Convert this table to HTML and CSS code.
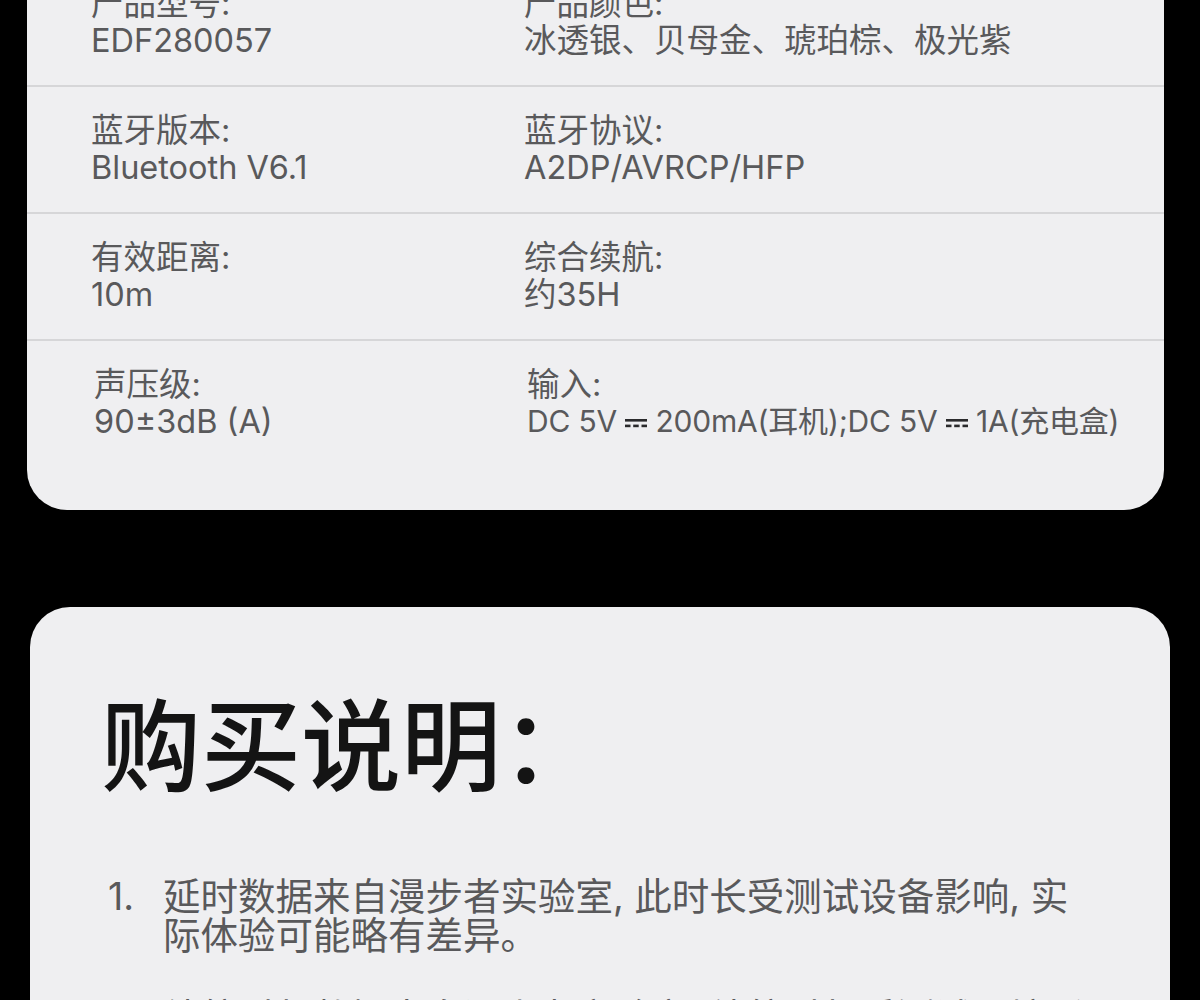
FILE: index.html
```html
<!DOCTYPE html>
<html lang="zh-CN">
<head>
    <meta charset="UTF-8">
    <meta name="viewport" content="width=device-width, initial-scale=1.0">
    <title>产品参数与购买说明</title>
    <link rel="stylesheet" href="styles.css">
</head>
<body>

    <div class="page">
        <section class="card specs">
            <div class="spec-row">
                <div class="spec">
                    <div class="spec-label">产品型号:</div>
                    <div class="spec-value">EDF280057</div>
                </div>
                <div class="spec">
                    <div class="spec-label">产品颜色:</div>
                    <div class="spec-value">冰透银、贝母金、琥珀棕、极光紫</div>
                </div>
            </div>
            <div class="spec-row">
                <div class="spec">
                    <div class="spec-label">蓝牙版本:</div>
                    <div class="spec-value">Bluetooth V6.1</div>
                </div>
                <div class="spec">
                    <div class="spec-label">蓝牙协议:</div>
                    <div class="spec-value">A2DP/AVRCP/HFP</div>
                </div>
            </div>
            <div class="spec-row">
                <div class="spec">
                    <div class="spec-label">有效距离:</div>
                    <div class="spec-value">10m</div>
                </div>
                <div class="spec">
                    <div class="spec-label">综合续航:</div>
                    <div class="spec-value">约35H</div>
                </div>
            </div>
            <div class="spec-row last">
                <div class="spec">
                    <div class="spec-label">声压级:</div>
                    <div class="spec-value">90±3dB (A)</div>
                </div>
                <div class="spec">
                    <div class="spec-label">输入:</div>
                    <div class="spec-value small">DC 5V <svg class="dc" viewBox="0 0 22 9" width="22" height="9"><rect x="0" y="0" width="22" height="2.6"/><rect x="0" y="5.6" width="5.5" height="2.6"/><rect x="8.2" y="5.6" width="5.5" height="2.6"/><rect x="16.5" y="5.6" width="5.5" height="2.6"/></svg> 200mA(耳机);DC 5V <svg class="dc" viewBox="0 0 22 9" width="22" height="9"><rect x="0" y="0" width="22" height="2.6"/><rect x="0" y="5.6" width="5.5" height="2.6"/><rect x="8.2" y="5.6" width="5.5" height="2.6"/><rect x="16.5" y="5.6" width="5.5" height="2.6"/></svg> 1A(充电盒)</div>
                </div>
            </div>
        </section>

        <section class="card notes">
            <h2 class="notes-title">购买说明：</h2>
            <ol class="notes-list">
                <li>
                    <span class="note-num">1.</span>
                    <span class="note-text">延时数据来自漫步者实验室, 此时长受测试设备影响, 实际体验可能略有差异。</span>
                </li>
                <li>
                    <span class="note-num">2.</span>
                    <span class="note-text">续航时长数据来自漫步者实验室, 续航时长受测试环境影响, 实际体验可能略有差异。</span>
                </li>
            </ol>
        </section>
    </div>

</body>
</html>
```

FILE: styles.css
```css
body {
    margin: 0;
    padding: 0;
    background-color: #000;
    font-family: Inter, "Noto Sans CJK SC", sans-serif;
    overflow: hidden;
}
.page {
    width: 1200px;
}
.card {
    background-color: #efeff1;
}
.specs {
    margin: -40px 36px 0 27px;
    border-radius: 0 0 40px 40px;
}
.spec-row {
    display: grid;
    grid-template-columns: 433px 1fr;
    padding: 25px 0 26px 64px;
    border-bottom: 2px solid #d6d6d8;
}
.spec-row.last {
    border-bottom: none;
    padding: 25px 0 70px 67px;
}
.spec-label, .spec-value {
    font-size: 32.5px;
    line-height: 37px;
    color: #59595b;
    white-space: nowrap;
}
.spec-value.small {
    font-size: 30px;
    letter-spacing: -0.2px;
}
.dc {
    fill: #2a2a2c;
    vertical-align: 4px;
}
.notes {
    margin: 97px 30px 0 30px;
    padding: 80px 75px 60px 78px;
    border-radius: 40px;
}
.notes-title {
    margin: 0 0 70px -7px;
    font-size: 100px;
    line-height: 120px;
    font-weight: 500;
    color: #141414;
}
.notes-list {
    list-style: none;
    margin: 0;
    padding: 0;
}
.notes-list li {
    display: flex;
    margin-bottom: 43px;
    font-size: 37.5px;
    line-height: 39px;
    color: #59595b;
}
.note-num {
    flex: 0 0 55px;
}
.note-text {
    flex: 1;
}
```
